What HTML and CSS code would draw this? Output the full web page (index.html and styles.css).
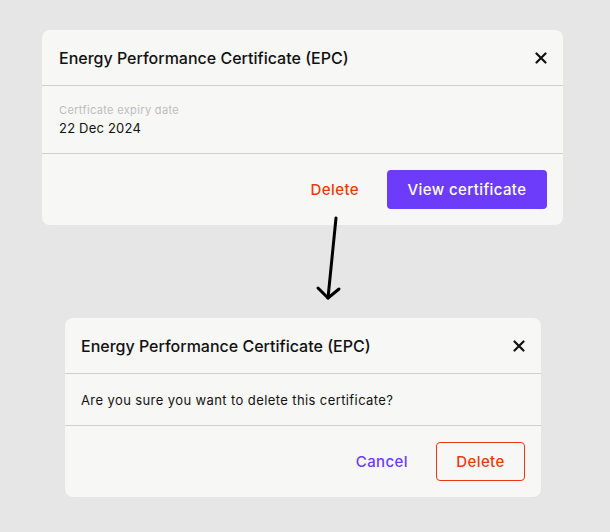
FILE: index.html
```html
<!DOCTYPE html>
<html>
<head>
<meta charset="utf-8">
<link rel="stylesheet" href="styles.css">
</head>
<body>
<div class="canvas">
  <section class="card card-top">
    <header class="card-header">
      <h2 class="card-title">Energy Performance Certificate (EPC)</h2>
      <button class="close" aria-label="Close">
        <svg width="12" height="12" viewBox="0 0 12 12"><path d="M1.5 1.5 L10.5 10.5 M10.5 1.5 L1.5 10.5" stroke="#111" stroke-width="2.2" stroke-linecap="round"/></svg>
      </button>
    </header>
    <div class="card-body body-field">
      <div class="field-label">Certficate expiry date</div>
      <div class="field-value">22 Dec 2024</div>
    </div>
    <footer class="card-footer">
      <button class="btn btn-text-red">Delete</button>
      <button class="btn btn-primary">View certificate</button>
    </footer>
  </section>

  <svg class="arrow" width="40" height="100" viewBox="0 0 40 100">
    <path d="M27 8 L19 88" stroke="#000" stroke-width="3" fill="none" stroke-linecap="round"/>
    <path d="M9 78 L19 88 L30 79" stroke="#000" stroke-width="3" fill="none" stroke-linecap="round" stroke-linejoin="round"/>
  </svg>

  <section class="card card-bottom">
    <header class="card-header">
      <h2 class="card-title">Energy Performance Certificate (EPC)</h2>
      <button class="close" aria-label="Close">
        <svg width="12" height="12" viewBox="0 0 12 12"><path d="M1.5 1.5 L10.5 10.5 M10.5 1.5 L1.5 10.5" stroke="#111" stroke-width="2.2" stroke-linecap="round"/></svg>
      </button>
    </header>
    <div class="card-body body-text">
      <p class="message">Are you sure you want to delete this certificate?</p>
    </div>
    <footer class="card-footer">
      <button class="btn btn-text-purple">Cancel</button>
      <button class="btn btn-outline-red">Delete</button>
    </footer>
  </section>
</div>
</body>
</html>
```
FILE: styles.css
```css
* { box-sizing: border-box; }
html, body {
  margin: 0;
  padding: 0;
  background: #e6e6e6;
  font-family: Inter, "Liberation Sans", sans-serif;
  color: #111;
}
.canvas {
  position: relative;
  width: 610px;
  height: 532px;
  padding-top: 30px;
}
.card {
  background: #f7f7f5;
  border-radius: 8px;
}
.card-top {
  margin-left: 42px;
  width: 521px;
}
.card-bottom {
  margin-left: 65px;
  width: 476px;
  margin-top: 93px;
}
.card-header {
  height: 56px;
  display: flex;
  align-items: center;
  justify-content: space-between;
  padding: 0 16px 0 17px;
  border-bottom: 1px solid #cfcfcf;
}
.card-bottom .card-header { padding-left: 16px; }
.card-title {
  margin: 0;
  font-size: 16px;
  font-weight: 500;
  letter-spacing: 0;
}
.close {
  border: 0;
  background: none;
  padding: 0;
  width: 12px;
  height: 12px;
  display: flex;
}
.card-body {
  border-bottom: 1px solid #cfcfcf;
  padding: 0 17px;
}
.body-field {
  height: 68px;
  padding-top: 16px;
}
.field-label {
  font-size: 11px;
  color: #bdbdbd;
  line-height: 16px;
  letter-spacing: 0.35px;
}
.field-value {
  font-size: 13px;
  line-height: 20px;
  color: #111;
  letter-spacing: 0.2px;
}
.body-text {
  height: 52px;
  display: flex;
  align-items: center;
  padding-left: 16px;
  padding-top: 1px;
}
.message {
  margin: 0;
  font-size: 13px;
  letter-spacing: 0.4px;
}
.card-footer {
  height: 71px;
  display: flex;
  align-items: center;
  justify-content: flex-end;
  padding: 0 16px;
  gap: 8px;
}
.btn {
  font-family: inherit;
  font-size: 15px;
  font-weight: 500;
  letter-spacing: 0.4px;
  height: 39px;
  border-radius: 4px;
  border: 0;
  background: none;
  padding: 0 20px;
  cursor: pointer;
}
.btn-text-red { color: #e83a10; padding: 0 20px; }
.btn-text-purple { color: #6c3cfa; padding: 0 20px; }
.btn-primary {
  background: #6c3cfa;
  color: #fff;
  width: 160px;
  padding: 0;
}
.btn-outline-red {
  border: 1px solid #e83a10;
  color: #e83a10;
  width: 89px;
  padding: 0;
}
.arrow {
  position: absolute;
  left: 309px;
  top: 210px;
}
```
